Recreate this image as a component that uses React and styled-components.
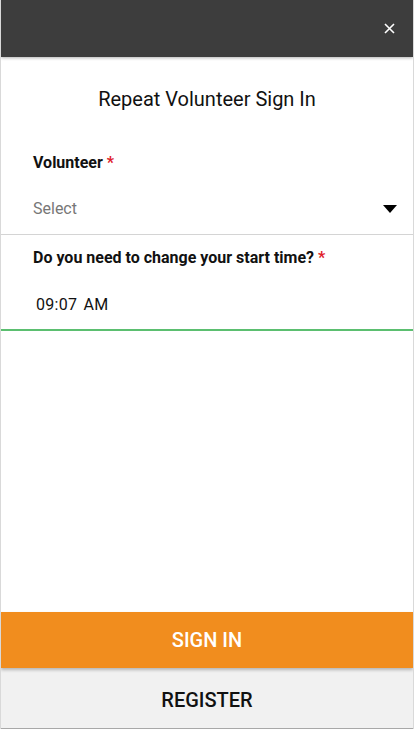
import React from "react";
import styled, { createGlobalStyle } from "styled-components";

const Global = createGlobalStyle`
  html, body {
    margin: 0;
    padding: 0;
    background: #fff;
    font-family: Roboto, "Liberation Sans", sans-serif;
  }
  * { box-sizing: border-box; }
`;

const App = () => {
  return (
    <>
      <Global />
      <Screen>
        <Header>
          <CloseButton aria-label="close">
            <svg width="11" height="11" viewBox="0 0 11 11">
              <path d="M1 1L10 10M10 1L1 10" stroke="#fff" strokeWidth="1.6" />
            </svg>
          </CloseButton>
        </Header>
        <Body>
          <Title>Repeat Volunteer Sign In</Title>
          <Field>
            <Label>
              Volunteer <Required>*</Required>
            </Label>
            <SelectRow>
              <Placeholder>Select</Placeholder>
              <Caret />
            </SelectRow>
          </Field>
          <Field $active>
            <Label>
              Do you need to change your start time? <Required>*</Required>
            </Label>
            <TimeValue>09:07 AM</TimeValue>
          </Field>
        </Body>
        <Footer>
          <PrimaryButton>SIGN IN</PrimaryButton>
          <SecondaryButton>REGISTER</SecondaryButton>
        </Footer>
      </Screen>
    </>
  );
};

const Screen = styled.div`
  height: 729px;
  display: flex;
  flex-direction: column;
  border-left: 1px solid #d9d9d9;
  border-right: 1px solid #d9d9d9;
  overflow: hidden;
`;

const Header = styled.div`
  height: 57px;
  background: #3d3d3d;
  display: flex;
  justify-content: flex-end;
  align-items: center;
  padding: 0 14px 0 0;
  box-shadow: 0 1px 3px rgba(0, 0, 0, 0.3);
  position: relative;
  z-index: 1;
`;

const CloseButton = styled.button`
  background: none;
  border: 0;
  padding: 4px;
  display: flex;
  cursor: pointer;
`;

const Body = styled.div`
  flex: 1;
  display: flex;
  flex-direction: column;
`;

const Title = styled.h1`
  margin: 0;
  padding: 30px 0 0;
  height: 88px;
  text-align: center;
  font-size: 20px;
  line-height: 24px;
  font-weight: 400;
  color: #111;
`;

const Field = styled.div`
  padding: ${(p) => (p.$active ? "12px" : "7px")} 0 0 32px;
  border-bottom: ${(p) => (p.$active ? "2px solid #5bbf70" : "1px solid #d4d4d4")};
`;

const Label = styled.div`
  font-size: 16px;
  font-weight: 700;
  color: #111;
  height: 21px;
  line-height: 21px;
`;

const Required = styled.span`
  color: #e0202a;
`;

const SelectRow = styled.div`
  display: flex;
  align-items: center;
  justify-content: space-between;
  padding: 26px 16px 15px 0;
`;

const Placeholder = styled.span`
  font-size: 16px;
  color: #777;
  line-height: 20px;
`;

const Caret = styled.span`
  width: 0;
  height: 0;
  border-left: 7px solid transparent;
  border-right: 7px solid transparent;
  border-top: 8px solid #000;
`;

const TimeValue = styled.div`
  font-size: 16px;
  color: #111;
  letter-spacing: 0.3px;
  word-spacing: 2px;
  padding: 27px 0 14px 3px;
  line-height: 20px;
`;

const Footer = styled.div`
  display: flex;
  flex-direction: column;
`;

const PrimaryButton = styled.button`
  height: 56px;
  border: 0;
  background: #f18d1e;
  color: #fff;
  font-family: Roboto, "Liberation Sans", sans-serif;
  font-size: 20px;
  font-weight: 500;
  box-shadow: 0 2px 3px rgba(0, 0, 0, 0.25);
  position: relative;
  z-index: 1;
`;

const SecondaryButton = styled.button`
  height: 61px;
  border: 0;
  border-bottom: 1px solid #a8a8a8;
  background: #f1f1f1;
  color: #111;
  padding-top: 4px;
  font-family: Roboto, "Liberation Sans", sans-serif;
  font-size: 20px;
  font-weight: 500;
`;

export default App;
